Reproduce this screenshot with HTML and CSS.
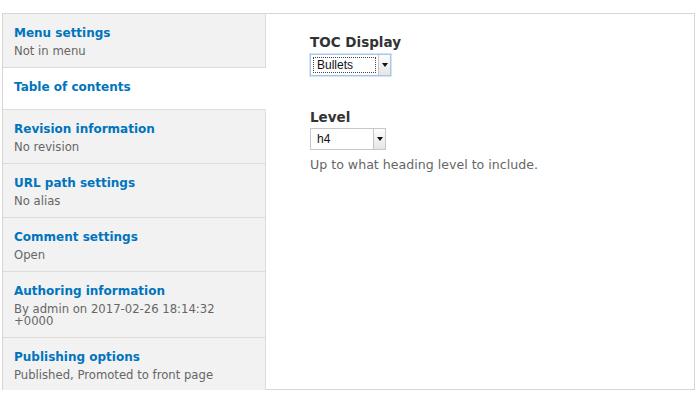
FILE: index.html
```html
<!DOCTYPE html>
<html lang="en">
<head>
<meta charset="utf-8">
<title>Vertical tabs</title>
<link rel="stylesheet" href="styles.css">
</head>
<body>
<div class="vtabs">
  <ul class="vtabs-menu">
    <li class="vtab"><a class="vtab-title">Menu settings</a><span class="vtab-summary">Not in menu</span></li>
    <li class="vtab vtab-active"><a class="vtab-title">Table of contents</a></li>
    <li class="vtab"><a class="vtab-title">Revision information</a><span class="vtab-summary">No revision</span></li>
    <li class="vtab"><a class="vtab-title">URL path settings</a><span class="vtab-summary">No alias</span></li>
    <li class="vtab"><a class="vtab-title">Comment settings</a><span class="vtab-summary">Open</span></li>
    <li class="vtab"><a class="vtab-title">Authoring information</a><span class="vtab-summary">By admin on 2017-02-26 18:14:32 +0000</span></li>
    <li class="vtab"><a class="vtab-title">Publishing options</a><span class="vtab-summary">Published, Promoted to front page</span></li>
  </ul>
  <div class="vtabs-pane">
    <div class="field">
      <label class="field-label">TOC Display</label>
      <div class="select select-focus">
        <span class="select-value"><span class="select-ring">Bullets</span></span>
        <span class="select-arrow"></span>
      </div>
    </div>
    <div class="field field-level">
      <label class="field-label">Level</label>
      <div class="select select-level">
        <span class="select-value">h4</span>
        <span class="select-arrow"></span>
      </div>
      <div class="field-desc">Up to what heading level to include.</div>
    </div>
  </div>
</div>
</body>
</html>
```
FILE: styles.css
```css
html, body {
  margin: 0;
  padding: 0;
  background: #fff;
}
body {
  font-family: "DejaVu Sans", Verdana, sans-serif;
  color: #333;
}
.vtabs {
  margin: 13px 5px 0 2px;
  border: 1px solid #d6d6d6;
  display: grid;
  grid-template-columns: 263px 1fr;
  height: 377px;
  box-sizing: border-box;
}
.vtabs-menu {
  list-style: none;
  margin: 0;
  padding: 0;
  background: #f2f2f2;
  border-right: 1px solid #dcdcdc;
  display: flex;
  flex-direction: column;
}
.vtab {
  display: flex;
  flex-direction: column;
  padding: 10px 11px 10px 11px;
  border-bottom: 1px solid #dcdcdc;
  margin-right: -1px;
  border-right: 1px solid #dcdcdc;
}
.vtab:last-child {
  border-bottom: none;
}
.vtab-active {
  background: #fff;
  border-right-color: #fff;
  padding-bottom: 13px;
}
.vtab-title {
  color: #0074bd;
  font-weight: bold;
  font-size: 12px;
  line-height: 18px;
}
.vtab-summary {
  color: #666;
  font-size: 11.65px;
  line-height: 12px;
  padding-top: 3px;
}
.vtabs-pane {
  padding: 19px 0 0 44px;
}
.field-label {
  display: block;
  font-weight: bold;
  font-size: 13.5px;
  line-height: 18px;
  color: #333;
}
.field-level {
  margin-top: 32px;
}
.select {
  display: flex;
  width: 81px;
  height: 22px;
  box-sizing: border-box;
  border: 1px solid #c8c8c8;
  background: #fff;
  margin-top: 3px;
  font-family: "Liberation Sans", Arial, sans-serif;
  font-size: 12px;
  color: #111;
}
.select-focus {
  border-color: #a9c6e6;
  box-shadow: 0 0 0 1px #d5e4f5;
}
.select-level {
  width: 76px;
  margin-top: 2px;
}
.select-value {
  flex: 1;
  display: flex;
  align-items: center;
  padding: 2px;
}
.select-ring {
  flex: 1;
  align-self: stretch;
  display: flex;
  align-items: center;
  border: 1px dotted #444;
  padding-left: 3px;
}
.select-level .select-value {
  padding-left: 6px;
}
.select-arrow {
  width: 11px;
  border-left: 1px solid #c4c4c4;
  background: linear-gradient(#fdfdfd, #e6e6e6);
  position: relative;
}
.select-arrow::after {
  content: "";
  position: absolute;
  left: 3px;
  top: 8px;
  border-left: 3px solid transparent;
  border-right: 3px solid transparent;
  border-top: 4px solid #111;
}
.field-desc {
  margin-top: 7px;
  font-size: 12.6px;
  line-height: 16px;
  color: #666;
}
```
